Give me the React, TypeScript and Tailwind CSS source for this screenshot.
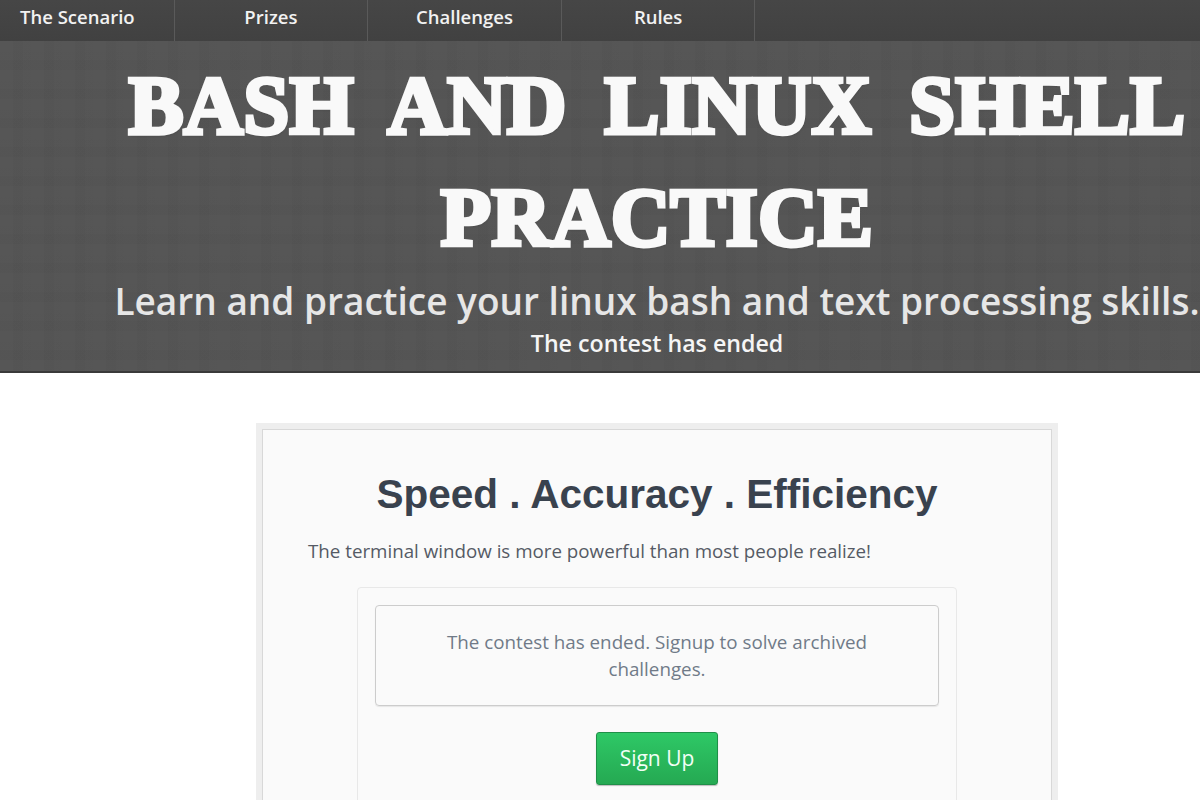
export default function App() {
  const nav = ["The Scenario", "Prizes", "Challenges", "Rules"];
  return (
    <div className="h-[800px] w-[1200px] overflow-hidden bg-white font-['Open_Sans',sans-serif]">
      <nav className="flex h-[41px] w-full bg-[#444444] bg-gradient-to-b from-[#464646] to-[#414141]">
        <div className="-ml-[19px] flex">
          {nav.map((n) => (
            <a
              key={n}
              className="flex h-[41px] w-[193.6px] items-center justify-center border-r border-[#5a5a5a] pb-[8px] text-[18.5px] font-semibold text-[#f2f2f2]"
            >
              {n}
            </a>
          ))}
        </div>
      </nav>
      <header className="flex h-[332px] w-[1314px] flex-col items-center border-b-2 border-[#3a3a3a] bg-[#545454] bg-[repeating-linear-gradient(90deg,rgba(255,255,255,0.006)_0_13px,rgba(0,0,0,0.009)_13px_23px,rgba(255,255,255,0.004)_23px_31px),repeating-linear-gradient(0deg,rgba(255,255,255,0.006)_0_11px,rgba(0,0,0,0.009)_11px_21px,rgba(255,255,255,0.004)_21px_29px)]">
        <h1 className="mt-[9px] w-[1200px] text-center font-['Liberation_Serif',serif] text-[82px] font-bold leading-[112px] tracking-[0.5px] text-[#f9f9f9] [word-spacing:17px] [-webkit-text-stroke:4.5px_#f9f9f9] [text-shadow:1px_2px_2px_#3d3d3d]">
          BASH AND LINUX SHELL PRACTICE
        </h1>
        <p className="mt-[5px] whitespace-nowrap text-[37px] font-semibold leading-[44px] text-[#e6e6e6]">
          Learn and practice your linux bash and text processing skills.
        </p>
        <p className="mt-[4px] text-[23.2px] font-semibold leading-[32px] text-[#f5f5f5]">The contest has ended</p>
      </header>
      <main className="ml-[256px] mt-[50px] w-[802px] border-[6px] border-[#eeeeee]">
        <section className="h-[400px] border border-[#d8d8d8] bg-[#fafafa] px-[45px]">
          <h2 className="mt-[39px] text-center font-['Liberation_Sans',sans-serif] text-[40.5px] font-bold leading-[50px] text-[#39424e]">
            Speed . Accuracy . Efficiency
          </h2>
          <p className="mt-[18px] text-[18.75px] leading-[28px] text-[#555a65]">
            The terminal window is more powerful than most people realize!
          </p>
          <div className="ml-[49px] mt-[22px] h-[300px] w-[600px] rounded border border-[#e8e8e8] p-[17px]">
            <div className="flex h-[101px] flex-col items-center justify-center rounded border border-[#cccccc] px-[60px] text-center text-[18.8px] leading-[27px] text-[#707a88] shadow-[0_1px_1px_rgba(0,0,0,0.08)]">
              The contest has ended. Signup to solve archived challenges.
            </div>
            <button className="mx-auto mt-[26px] flex h-[53px] w-[122px] items-center justify-center rounded-[3px] border border-[#1f8f48] bg-gradient-to-b from-[#2ec866] to-[#25a952] text-[21px] text-[#f2fff6] shadow-[0_1px_1px_rgba(0,0,0,0.25)]">
              Sign Up
            </button>
          </div>
        </section>
      </main>
    </div>
  );
}
